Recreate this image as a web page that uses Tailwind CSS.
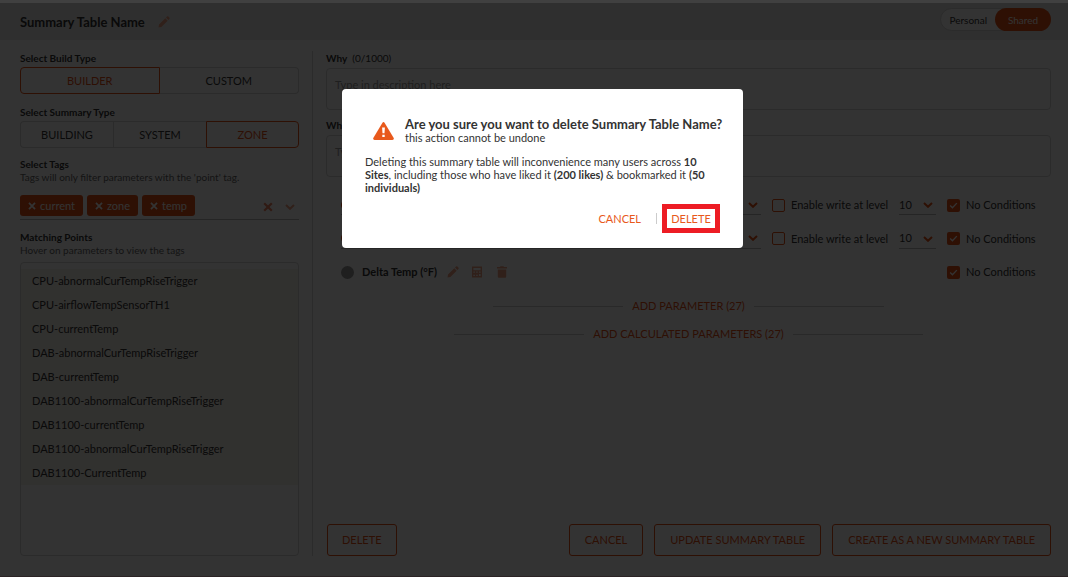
<!DOCTYPE html>
<html lang="en">

<head>
    <meta charset="UTF-8">
    <meta name="viewport" content="width=device-width, initial-scale=1.0">
    <title>Summary Table</title>
    <script src="https://cdn.jsdelivr.net/npm/@tailwindcss/browser@4"></script>
</head>

<body class="bg-white font-[Lato,'Open_Sans',sans-serif] text-[11px] leading-[14px] text-[#333]">
    <!-- icons -->
    <svg class="hidden">
        <symbol id="pencil" viewBox="0 0 12 12"><path d="M0.5 11.5L1 8.6 7.3 2.3 9.7 4.7 3.4 11zM8 1.6L9 .6Q9.7 0 10.4.6L11.4 1.6Q12 2.3 11.4 3L10.4 4z" fill="currentColor"/></symbol>
        <symbol id="chevron" viewBox="0 0 10 6"><path d="M1 1L5 4.8 9 1" fill="none" stroke="currentColor" stroke-width="2"/></symbol>
        <symbol id="cross" viewBox="0 0 10 10"><path d="M1.2 1.2L8.8 8.8M8.8 1.2L1.2 8.8" fill="none" stroke="currentColor" stroke-width="2.2"/></symbol>
        <symbol id="check" viewBox="0 0 10 8"><path d="M1.2 4L3.8 6.5 8.8 1.3" fill="none" stroke="currentColor" stroke-width="1.6"/></symbol>
        <symbol id="calc" viewBox="0 0 12 12"><path fill-rule="evenodd" d="M1 .5h10v11H1zM2.4 1.9v2.3h7.2V1.9zM2.4 5.5v1.3h1.5V5.5zM5.2 5.5v1.3h1.5V5.5zM8 5.5v1.3h1.6V5.5zM2.4 8.7V10h1.5V8.7zM5.2 8.7V10h1.5V8.7zM8 8v2h1.6V8z" fill="currentColor"/></symbol>
        <symbol id="trash" viewBox="0 0 10 12"><path d="M0 1h3l.5-.8h3L7 1h3v1.6H0zM.8 3.6h8.4V10.7Q9.2 11.8 8.1 11.8H1.9Q.8 11.8.8 10.7z" fill="currentColor"/></symbol>
    </svg>

    <div class="flex h-screen flex-col border-b border-[#d8b0b8]">
        <header class="flex h-10 shrink-0 items-center border-t-[3px] border-[#404040] bg-[#ececec] pr-[17px] pl-5">
            <h1 class="text-[13px] font-bold">Summary Table Name</h1>
            <button type="button" aria-label="Rename" class="ml-[13px] text-[#f0a080]"><svg class="size-3"><use href="#pencil"/></svg></button>
            <div class="mb-1 ml-auto flex h-[23px] rounded-full border border-[#d4d4d4] bg-white text-[10px]">
                <button type="button" class="pr-2 pl-2">Personal</button>
                <button type="button" class="-my-px -mr-px w-14 rounded-full bg-[#e65014] text-white">Shared</button>
            </div>
        </header>

        <main class="flex min-h-0 flex-1 pt-[11px] pr-[17px] pb-5 pl-5">
            <section class="flex w-[279px] shrink-0 flex-col">
                <h2 class="text-[10px] font-bold">Select Build Type</h2>
                <div class="mt-[2px] grid h-[27px] grid-cols-2">
                    <button type="button" class="rounded-l border border-[#e65014] text-[#e65014]">BUILDER</button>
                    <button type="button" class="rounded-r border border-l-0 border-[#d4d4d4]">CUSTOM</button>
                </div>

                <h2 class="mt-[11px] text-[10px] font-bold">Select Summary Type</h2>
                <div class="mt-[2px] grid h-[27px] grid-cols-3">
                    <button type="button" class="rounded-l border border-r-0 border-[#d4d4d4]">BUILDING</button>
                    <button type="button" class="border border-r-0 border-[#d4d4d4]">SYSTEM</button>
                    <button type="button" class="rounded-r border border-[#e65014] text-[#e65014]">ZONE</button>
                </div>

                <h2 class="mt-[10px] text-[10px] leading-[13px] font-bold">Select Tags</h2>
                <p class="text-[10px] leading-[13px] text-[#666]">Tags will only filter parameters with the 'point' tag.</p>
                <div class="mt-[11px] flex items-start gap-1 border-b border-[#bbb] pb-[3px] text-white">
                    <button type="button" class="flex h-[21px] items-center gap-1 rounded-[3px] bg-[#e65014] px-2"><svg class="size-2"><use href="#cross"/></svg>current</button>
                    <button type="button" class="flex h-[21px] items-center gap-1 rounded-[3px] bg-[#e65014] px-2"><svg class="size-2"><use href="#cross"/></svg>zone</button>
                    <button type="button" class="flex h-[21px] items-center gap-1 rounded-[3px] bg-[#e65014] px-2"><svg class="size-2"><use href="#cross"/></svg>temp</button>
                    <button type="button" aria-label="Clear tags" class="mt-[7px] ml-auto text-[#f08060]"><svg class="size-[10px]"><use href="#cross"/></svg></button>
                    <button type="button" aria-label="Open tags" class="mt-[9px] mr-1 ml-2 text-[#f0a080]"><svg class="h-[6px] w-[10px]"><use href="#chevron"/></svg></button>
                </div>

                <h2 class="mt-[11px] text-[10px] leading-[13px] font-bold">Matching Points</h2>
                <p class="text-[10px] leading-[13px] text-[#666]">Hover on parameters to view the tags</p>
                <div class="mt-[5px] flex-1 rounded border border-[#d4d4d4] pt-[6px]">
                    <ul class="bg-[#f6f2ea] pl-[11px] leading-6">
                        <li>CPU-abnormalCurTempRiseTrigger</li>
                        <li>CPU-airflowTempSensorTH1</li>
                        <li>CPU-currentTemp</li>
                        <li>DAB-abnormalCurTempRiseTrigger</li>
                        <li>DAB-currentTemp</li>
                        <li>DAB1100-abnormalCurTempRiseTrigger</li>
                        <li>DAB1100-currentTemp</li>
                        <li>DAB1100-abnormalCurTempRiseTrigger</li>
                        <li>DAB1100-CurrentTemp</li>
                    </ul>
                </div>
            </section>

            <section class="ml-[13px] flex min-w-0 flex-1 flex-col border-l border-[#d4d4d4] pl-[13px]">
                <label for="why" class="text-[10px]"><b>Why</b>&nbsp; (0/1000)</label>
                <textarea id="why" placeholder="Type in description here" class="mt-[3px] block h-[42px] w-full resize-none rounded border border-[#d4d4d4] px-2 pt-2 leading-4 placeholder:text-[#999]"></textarea>
                <label for="what" class="mt-2 text-[10px] font-bold">Wh</label>
                <textarea id="what" placeholder="Ty" class="mt-[3px] block h-[42px] w-full resize-none rounded border border-[#d4d4d4] px-2 pt-2 leading-4 placeholder:text-[#999]"></textarea>

                <div class="mt-[11px] pr-[15px] pl-[15px]">
                    <div class="grid h-[34px] grid-cols-[1fr_116px_37px_89px] items-center gap-[11px]">
                        <div class="flex h-5 items-center justify-between border-b border-[#bbb]">
                            <input type="radio" aria-label="Parameter 1" class="size-3 appearance-none rounded-full border border-[#e65014]">
                            <svg class="mr-[3px] h-[6px] w-[10px] text-[#e65014]"><use href="#chevron"/></svg>
                        </div>
                        <label class="flex items-center gap-[6px] whitespace-nowrap"><input type="checkbox" class="size-[13px] shrink-0 appearance-none rounded-[2px] border border-[#e65014]">Enable write at level</label>
                        <div class="relative">
                            <select aria-label="Write level 1" class="block h-5 w-full appearance-none border-b border-[#bbb]"><option>10</option></select>
                            <svg class="pointer-events-none absolute top-[7px] right-[3px] h-[6px] w-[10px] text-[#e65014]"><use href="#chevron"/></svg>
                        </div>
                        <label class="flex items-center gap-[6px] whitespace-nowrap"><span class="grid size-[13px] shrink-0 place-items-center *:[grid-area:1/1]"><input type="checkbox" checked class="size-[13px] appearance-none rounded-[2px] bg-[#e65014]"><svg class="z-10 h-[7px] w-[9px] text-white"><use href="#check"/></svg></span>No Conditions</label>
                    </div>
                    <div class="grid h-[33px] grid-cols-[1fr_116px_37px_89px] items-center gap-[11px]">
                        <div class="flex h-5 items-center justify-between border-b border-[#bbb]">
                            <input type="radio" aria-label="Parameter 2" class="size-3 appearance-none rounded-full border border-[#e65014]">
                            <svg class="mr-[3px] h-[6px] w-[10px] text-[#e65014]"><use href="#chevron"/></svg>
                        </div>
                        <label class="flex items-center gap-[6px] whitespace-nowrap"><input type="checkbox" class="size-[13px] shrink-0 appearance-none rounded-[2px] border border-[#e65014]">Enable write at level</label>
                        <div class="relative">
                            <select aria-label="Write level 2" class="block h-5 w-full appearance-none border-b border-[#bbb]"><option>10</option></select>
                            <svg class="pointer-events-none absolute top-[7px] right-[3px] h-[6px] w-[10px] text-[#e65014]"><use href="#chevron"/></svg>
                        </div>
                        <label class="flex items-center gap-[6px] whitespace-nowrap"><span class="grid size-[13px] shrink-0 place-items-center *:[grid-area:1/1]"><input type="checkbox" checked class="size-[13px] appearance-none rounded-[2px] bg-[#e65014]"><svg class="z-10 h-[7px] w-[9px] text-white"><use href="#check"/></svg></span>No Conditions</label>
                    </div>
                    <div class="grid h-[34px] grid-cols-[1fr_89px] items-center gap-[11px]">
                        <div class="flex items-center text-[#f0a080]">
                            <span class="size-[13px] rounded-full bg-[#999]"></span>
                            <b class="mr-[10px] ml-2 text-[#333]">Delta Temp (°F)</b>
                            <button type="button" aria-label="Edit"><svg class="size-3"><use href="#pencil"/></svg></button>
                            <button type="button" aria-label="Calculate" class="ml-3"><svg class="size-3"><use href="#calc"/></svg></button>
                            <button type="button" aria-label="Remove" class="ml-[14px]"><svg class="h-3 w-[10px]"><use href="#trash"/></svg></button>
                        </div>
                        <label class="flex items-center gap-[6px] whitespace-nowrap"><span class="grid size-[13px] shrink-0 place-items-center *:[grid-area:1/1]"><input type="checkbox" checked class="size-[13px] appearance-none rounded-[2px] bg-[#e65014]"><svg class="z-10 h-[7px] w-[9px] text-white"><use href="#check"/></svg></span>No Conditions</label>
                    </div>
                </div>

                <div class="mt-[10px] flex items-center justify-center gap-[9px] text-[#e65014]">
                    <span class="h-px w-[130px] bg-[#ccc]"></span>
                    <button type="button">ADD PARAMETER (27)</button>
                    <span class="h-px w-[130px] bg-[#ccc]"></span>
                </div>
                <div class="mt-[14px] flex items-center justify-center gap-[9px] text-[#e65014]">
                    <span class="h-px w-[130px] bg-[#ccc]"></span>
                    <button type="button">ADD CALCULATED PARAMETERS (27)</button>
                    <span class="h-px w-[130px] bg-[#ccc]"></span>
                </div>

                <div class="mt-auto flex h-8 gap-[11px] pl-px text-[#e65014]">
                    <button type="button" class="mr-auto rounded-[3px] border border-[#e65014] px-[14px]">DELETE</button>
                    <button type="button" class="rounded-[3px] border border-[#e65014] px-[15px]">CANCEL</button>
                    <button type="button" class="rounded-[3px] border border-[#e65014] px-[15px]">UPDATE SUMMARY TABLE</button>
                    <button type="button" class="rounded-[3px] border border-[#e65014] px-[15px]">CREATE AS A NEW SUMMARY TABLE</button>
                </div>
            </section>
        </main>
    </div>

    <div class="fixed inset-x-0 top-[3px] bottom-0 z-20 flex items-start justify-center bg-black/80 pt-[86px] pl-[17px]">
        <div role="dialog" aria-modal="true" aria-labelledby="dialog-title" class="w-[401px] rounded bg-white px-[23px] pt-7 pb-[15px]">
            <div class="flex items-center pl-2">
                <svg class="h-[18px] w-[21px] shrink-0" viewBox="0 0 21 18">
                    <path d="M9.3.9Q10.5-.8 11.7.9L20.7 16Q21.3 18 19.4 18H1.6Q-.3 18 .3 16z" fill="#e8591c"/>
                    <path d="M9.1 5.5h2.8l-.4 5.8h-2zM9.3 12.7h2.4V15H9.3z" fill="#fff"/>
                </svg>
                <div class="ml-[11px]">
                    <h2 id="dialog-title" class="text-[13px] font-bold whitespace-nowrap">Are you sure you want to delete Summary Table Name?</h2>
                    <p>this action cannot be undone</p>
                </div>
            </div>
            <p class="mt-[10px] leading-[13px]">Deleting this summary table will inconvenience many users across <b>10 Sites</b>, including those who have liked it <b>(200 likes)</b> &amp; bookmarked it <b>(50 individuals)</b></p>
            <div class="mt-[10px] flex items-center justify-end text-[#e8591c]">
                <button type="button">CANCEL</button>
                <span class="mr-[5px] ml-[15px] h-[11px] w-px bg-[#ccc]"></span>
                <button type="button" class="h-[29px] w-[58px] border-[5px] border-[#ed1c24]">DELETE</button>
            </div>
        </div>
    </div>
</body>

</html>
